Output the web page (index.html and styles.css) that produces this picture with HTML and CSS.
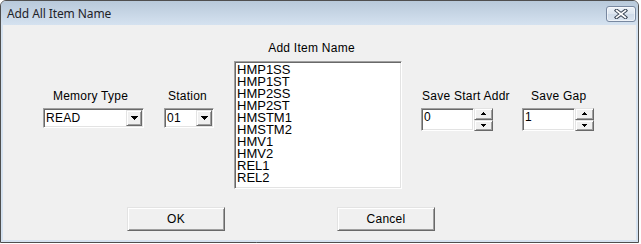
FILE: index.html
```html
<!DOCTYPE html>
<html>
<head>
<meta charset="utf-8">
<link rel="stylesheet" href="styles.css">
</head>
<body>
<div class="window">
  <div class="titlebar">
    <span class="title">Add All Item Name</span>
    <button class="close" aria-label="Close">
      <svg width="14" height="10" viewBox="0 0 14 10">
        <path d="M2.5 1.5 L11.5 8.5 M11.5 1.5 L2.5 8.5" stroke="#3a4656" stroke-width="3.6" stroke-linecap="square" fill="none"/>
        <path d="M2.5 1.5 L11.5 8.5 M11.5 1.5 L2.5 8.5" stroke="#ffffff" stroke-width="1.6" stroke-linecap="square" fill="none"/>
      </svg>
    </button>
  </div>
  <div class="client">
    <div class="fields">
      <div class="field f-mem">
        <div class="label">Memory Type</div>
        <div class="combo">
          <span class="combo-text">READ</span>
          <span class="drop"><svg class="tri" width="7" height="4" viewBox="0 0 7 4"><path d="M0 0h7v1h-1v1h-1v1h-1v1h-1v-1h-1v-1h-1v-1h-1z" fill="#000"/></svg></span>
        </div>
      </div>
      <div class="field f-station">
        <div class="label">Station</div>
        <div class="combo">
          <span class="combo-text">01</span>
          <span class="drop"><svg class="tri" width="7" height="4" viewBox="0 0 7 4"><path d="M0 0h7v1h-1v1h-1v1h-1v1h-1v-1h-1v-1h-1v-1h-1z" fill="#000"/></svg></span>
        </div>
      </div>
      <div class="field f-list">
        <div class="label">Add Item Name</div>
        <div class="listbox">
          <div class="item">HMP1SS</div>
          <div class="item">HMP1ST</div>
          <div class="item">HMP2SS</div>
          <div class="item">HMP2ST</div>
          <div class="item">HMSTM1</div>
          <div class="item">HMSTM2</div>
          <div class="item">HMV1</div>
          <div class="item">HMV2</div>
          <div class="item">REL1</div>
          <div class="item">REL2</div>
        </div>
      </div>
      <div class="field f-start">
        <div class="label">Save Start Addr</div>
        <div class="spinedit">
          <div class="edit">0</div>
          <div class="spin">
            <span class="spin-btn"><svg width="5" height="3" viewBox="0 0 5 3"><path d="M2 0h1v1h1v1h1v1h-5v-1h1v-1h1z" fill="#000"/></svg></span>
            <span class="spin-btn"><svg width="5" height="3" viewBox="0 0 5 3"><path d="M0 0h5v1h-1v1h-1v1h-1v-1h-1v-1h-1z" fill="#000"/></svg></span>
          </div>
        </div>
      </div>
      <div class="field f-gap">
        <div class="label">Save Gap</div>
        <div class="spinedit">
          <div class="edit">1</div>
          <div class="spin">
            <span class="spin-btn"><svg width="5" height="3" viewBox="0 0 5 3"><path d="M2 0h1v1h1v1h1v1h-5v-1h1v-1h1z" fill="#000"/></svg></span>
            <span class="spin-btn"><svg width="5" height="3" viewBox="0 0 5 3"><path d="M0 0h5v1h-1v1h-1v1h-1v-1h-1v-1h-1z" fill="#000"/></svg></span>
          </div>
        </div>
      </div>
    </div>
    <div class="buttons">
      <button class="btn">OK</button>
      <button class="btn">Cancel</button>
    </div>
  </div>
</div>
</body>
</html>
```

FILE: styles.css
```css
html, body {
  margin: 0;
  background: #ffffff;
}

body {
  font-family: "Liberation Sans", Arial, sans-serif;
  font-size: 12px;
  color: #000;
}

.window {
  width: 637px;
  height: 241px;
  border: 1px solid #4f4f4f;
  border-radius: 6px 6px 0 0;
  background: #d5e2f0;
  display: flex;
  flex-direction: column;
  overflow: hidden;
}

.titlebar {
  flex: none;
  height: 24px;
  display: flex;
  justify-content: space-between;
  align-items: flex-start;
  padding-left: 6px;
  background: linear-gradient(#b8c9da, #d5e2f0);
}

.title {
  margin-top: 5px;
  font-family: "Noto Sans", "Open Sans", sans-serif;
  font-size: 12px;
  line-height: 16px;
  color: #1f2329;
  letter-spacing: -0.1px;
}

.close {
  margin: 5px 2px 0 0;
  width: 30px;
  height: 16px;
  padding: 0;
  box-sizing: border-box;
  border: 1px solid #7888a0;
  border-radius: 3px;
  background: linear-gradient(#eef3f9, #dde6f0 50%, #cfdbe9 51%, #dce6f1);
  box-shadow: inset 0 0 0 1px rgba(255, 255, 255, 0.55);
  display: flex;
  align-items: center;
  justify-content: center;
}

.close svg {
  display: block;
}

.client {
  flex: 1;
  margin: 0 2px 2px;
  background: #f0f0f0;
  display: flex;
  flex-direction: column;
}

.fields {
  display: flex;
  align-items: flex-start;
}

.field {
  display: flex;
  flex-direction: column;
}

.label {
  line-height: 14px;
  white-space: nowrap;
  letter-spacing: 0.25px;
}

.f-mem {
  margin-left: 40px;
  padding-top: 64px;
  width: 101px;
  align-items: center;
  gap: 5px;
}

.f-mem .label {
  margin-right: 6px;
}

.f-station {
  margin-left: 20px;
  padding-top: 64px;
  width: 50px;
  align-items: center;
  gap: 5px;
}

.f-station .label {
  margin-right: 3px;
}

.f-list {
  margin-left: 20px;
  padding-top: 16px;
  width: 168px;
  align-items: center;
  gap: 6px;
}

.f-list .label {
  margin-right: 13px;
}

.f-start {
  margin-left: 19px;
  padding-top: 64px;
  width: 72px;
  gap: 5px;
}

.f-start .label {
  padding-left: 1px;
}

.f-gap {
  margin-left: 29px;
  padding-top: 64px;
  width: 72px;
  gap: 5px;
}

.f-gap .label {
  padding-left: 9px;
}

/* sunken 3D edge */
.combo,
.listbox,
.edit {
  box-sizing: border-box;
  border: 1px solid;
  border-color: #a0a0a0 #ffffff #ffffff #a0a0a0;
  box-shadow: inset 1px 1px #696969, inset -1px -1px #e3e3e3;
  background: #ffffff;
}

.combo {
  width: 100%;
  height: 20px;
  padding: 1px;
  display: flex;
}

.combo-text {
  flex: 1;
  padding-left: 1px;
  line-height: 16px;
  letter-spacing: 0.25px;
}

/* raised 3D edge */
.drop,
.spin-btn,
.btn {
  box-sizing: border-box;
  border: 1px solid;
  border-color: #e3e3e3 #696969 #696969 #e3e3e3;
  box-shadow: inset 1px 1px #ffffff, inset -1px -1px #a0a0a0;
  background: #f0f0f0;
}

.drop {
  width: 16px;
  height: 16px;
  display: flex;
  align-items: center;
  justify-content: center;
}

.drop svg,
.spin-btn svg {
  display: block;
}

.listbox {
  width: 168px;
  height: 128px;
  padding: 2px 1px 0 2px;
  overflow: hidden;
}

.item {
  font-size: 13px;
  line-height: 12px;
  white-space: nowrap;
}

.spinedit {
  display: flex;
  width: 72px;
  height: 23px;
}

.edit {
  width: 53px;
  height: 100%;
  padding: 1px 2px;
  line-height: 14px;
  letter-spacing: 0.25px;
}

.spin {
  width: 19px;
  display: flex;
  flex-direction: column;
}

.spin-btn {
  flex: 1;
  display: flex;
  align-items: center;
  justify-content: center;
}

.buttons {
  display: flex;
  margin-top: 18px;
  padding-left: 124px;
  gap: 112px;
}

.btn {
  width: 98px;
  height: 24px;
  padding: 0;
  font-family: "Liberation Sans", Arial, sans-serif;
  font-size: 12px;
  letter-spacing: 0.25px;
  color: #000;
}
```
